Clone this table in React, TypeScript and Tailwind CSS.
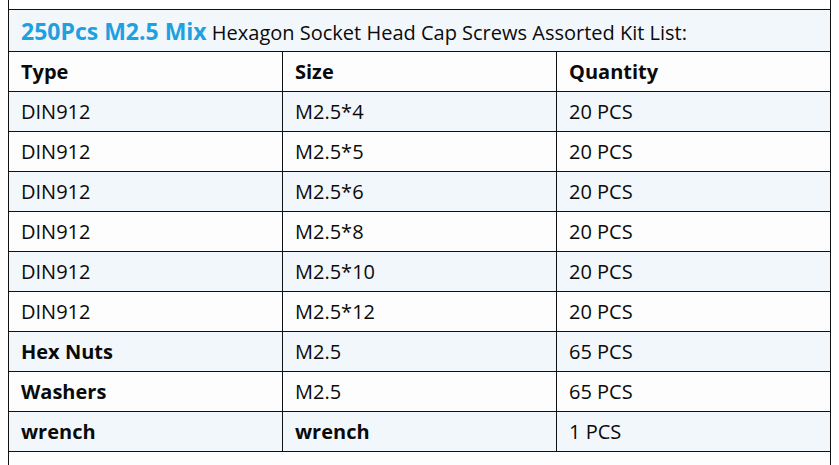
const rows: [string, string, string, boolean][] = [
  ['DIN912', 'M2.5*4', '20 PCS', false],
  ['DIN912', 'M2.5*5', '20 PCS', false],
  ['DIN912', 'M2.5*6', '20 PCS', false],
  ['DIN912', 'M2.5*8', '20 PCS', false],
  ['DIN912', 'M2.5*10', '20 PCS', false],
  ['DIN912', 'M2.5*12', '20 PCS', false],
  ['Hex Nuts', 'M2.5', '65 PCS', true],
  ['Washers', 'M2.5', '65 PCS', true],
  ['wrench', 'wrench', '1 PCS', true],
]

export default function App() {
  return (
    <div
      className="h-[465px] w-[839px] overflow-hidden bg-white pl-2 text-[#0a0a0a] font-['Open_Sans',sans-serif]"
    >
      <div className="h-[9px] w-[823px] border-x border-[#111]" />
      <table className="w-[823px] table-fixed border-collapse text-[20px]">
        <tbody>
          <tr className="h-[42px] bg-[#f2f7fc]">
            <td colSpan={3} className="border border-[#111] px-3 pt-[2px] whitespace-nowrap">
              <span className="text-[23px] font-bold text-[#1fa0df]">250Pcs M2.5 Mix</span>{' '}
              <span>Hexagon Socket Head Cap Screws Assorted Kit List:</span>
            </td>
          </tr>
          <tr className="h-[40px] bg-[#fdfdfd] font-bold">
            <td className="border border-[#111] px-3">Type</td>
            <td className="border border-[#111] px-3">Size</td>
            <td className="border border-[#111] px-3">Quantity</td>
          </tr>
          {rows.map(([type, size, qty, bold], i) => (
            <tr key={i} className={i % 2 === 0 ? 'h-[40px] bg-[#f2f7fc]' : 'h-[40px] bg-[#fdfdfd]'}>
              <td className={bold ? 'border border-[#111] px-3 font-bold' : 'border border-[#111] px-3'}>
                {type}
              </td>
              <td className={size === 'wrench' ? 'border border-[#111] px-3 font-bold' : 'border border-[#111] px-3'}>
                {size}
              </td>
              <td className="border border-[#111] px-3">{qty}</td>
            </tr>
          ))}
          <tr className="h-[40px] bg-[#fdfdfd]">
            <td colSpan={3} className="border border-[#111] px-3" />
          </tr>
        </tbody>
      </table>
    </div>
  )
}
